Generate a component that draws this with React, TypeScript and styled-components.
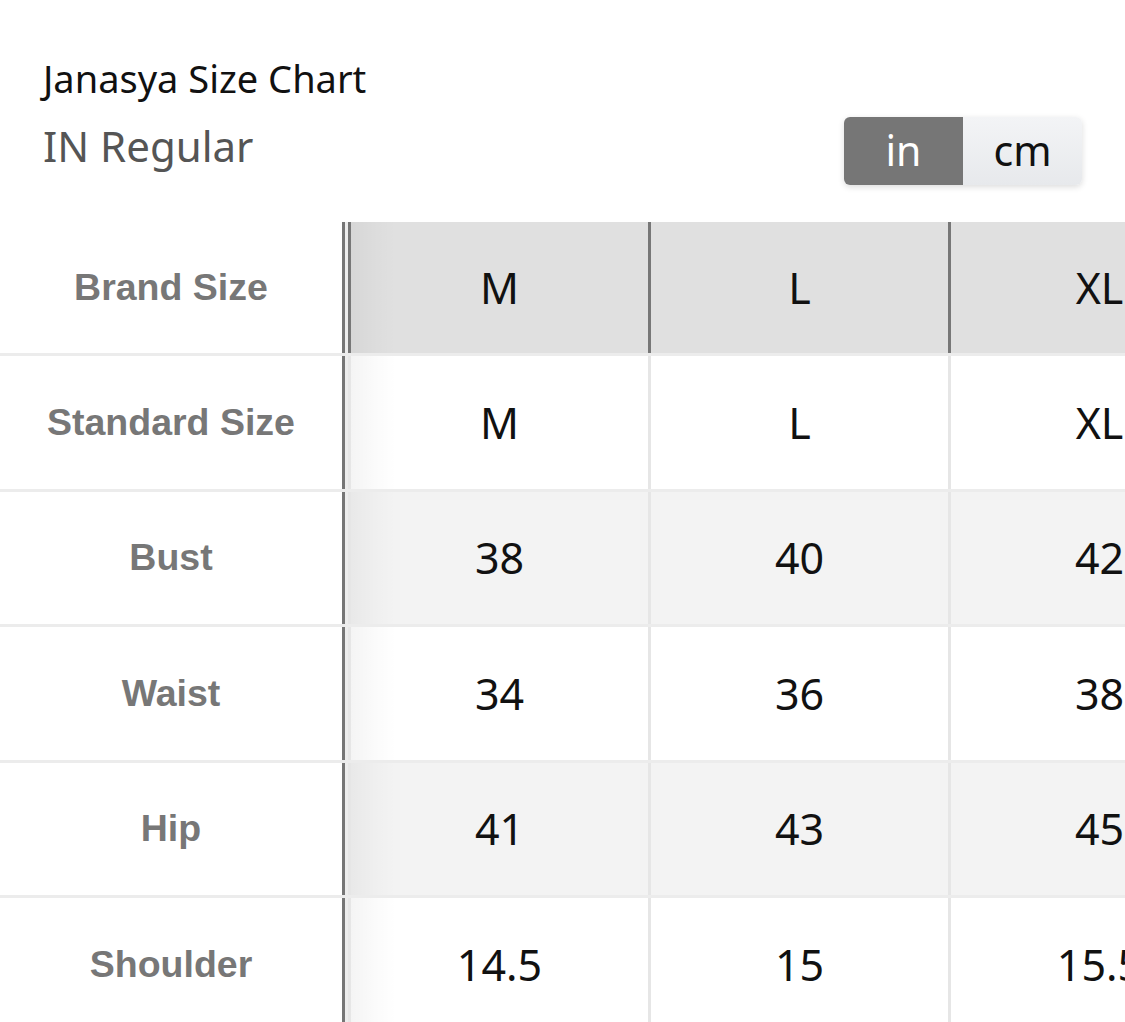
import React from "react";
import styled, { createGlobalStyle } from "styled-components";

const Global = createGlobalStyle`
  html, body { margin: 0; padding: 0; background: #fff; }
  body { font-family: "Noto Sans", "Open Sans", sans-serif; overflow: hidden; }
`;

const Page = styled.div`
  width: 1125px;
  height: 1022px;
  overflow: hidden;
  background: #fff;
`;

const Header = styled.div`
  padding: 56px 43px 0 43px;
`;

const Title = styled.div`
  font-size: 38px;
  line-height: 45px;
  color: #111;
`;

const SubRow = styled.div`
  margin-top: 16px;
  display: flex;
  justify-content: space-between;
  align-items: flex-start;
`;

const Subtitle = styled.div`
  margin-top: 1px;
  font-size: 42px;
  line-height: 56px;
  color: #555;
`;

const Toggle = styled.div`
  display: flex;
  border-radius: 6px;
  overflow: hidden;
  box-shadow: 0 2px 6px rgba(0, 0, 0, 0.14);
`;

const ToggleOption = styled.div<{ $active?: boolean }>`
  width: 119px;
  height: 68px;
  display: flex;
  align-items: center;
  justify-content: center;
  font-size: 41px;
  line-height: 1;
  padding-bottom: 2px;
  box-sizing: border-box;
  color: ${(p) => (p.$active ? "#fff" : "#111")};
  background: ${(p) =>
    p.$active ? "#767676" : "linear-gradient(#f3f4f6, #e7e9ec)"};
`;

const Table = styled.div`
  margin-top: 37px;
  width: 1125px;
  overflow: hidden;
`;

const Row = styled.div<{ $h: number }>`
  display: flex;
  height: ${(p) => p.$h}px;
  border-bottom: 3px solid #ececec;
  width: 1250px;
  background: #ededed;
`;

const LabelCell = styled.div`
  width: 345px;
  flex: none;
  box-sizing: border-box;
  border-right: 3px solid #767676;
  margin-right: 3px;
  background: #fff;
  display: flex;
  align-items: center;
  justify-content: center;
  font-family: "Liberation Sans", Arial, sans-serif;
  font-weight: 700;
  font-size: 37.5px;
  color: #777;
`;

const DataCell = styled.div<{ $head?: boolean; $shade?: boolean; $first?: boolean }>`
  width: 300px;
  flex: none;
  box-sizing: border-box;
  border-left: 3px solid ${(p) => (p.$head ? "#777" : "#e6e6e6")};
  background-color: ${(p) => (p.$head ? "#e0e0e0" : p.$shade ? "#f3f3f3" : "#fff")};
  background-image: ${(p) =>
    p.$first
      ? "linear-gradient(to right, rgba(0,0,0,0.045), rgba(0,0,0,0.015) 25px, rgba(0,0,0,0) 45px)"
      : "none"};
  display: flex;
  align-items: center;
  justify-content: center;
  font-size: 43px;
  color: #111;
`;

const rows: { label: string; values: string[] }[] = [
  { label: "Standard Size", values: ["M", "L", "XL"] },
  { label: "Bust", values: ["38", "40", "42"] },
  { label: "Waist", values: ["34", "36", "38"] },
  { label: "Hip", values: ["41", "43", "45"] },
  { label: "Shoulder", values: ["14.5", "15", "15.5"] },
];

export default function App() {
  return (
    <Page>
      <Global />
      <Header>
        <Title>Janasya Size Chart</Title>
        <SubRow>
          <Subtitle>IN Regular</Subtitle>
          <Toggle>
            <ToggleOption $active>in</ToggleOption>
            <ToggleOption>cm</ToggleOption>
          </Toggle>
        </SubRow>
      </Header>
      <Table>
        <Row $h={131}>
          <LabelCell>Brand Size</LabelCell>
          {["M", "L", "XL"].map((v, i) => (
            <DataCell key={v} $head $first={i === 0}>
              {v}
            </DataCell>
          ))}
        </Row>
        {rows.map((r, ri) => (
          <Row key={r.label} $h={132.5}>
            <LabelCell>{r.label}</LabelCell>
            {r.values.map((v, i) => (
              <DataCell key={i} $shade={ri % 2 === 1} $first={i === 0}>
                {v}
              </DataCell>
            ))}
          </Row>
        ))}
      </Table>
    </Page>
  );
}
